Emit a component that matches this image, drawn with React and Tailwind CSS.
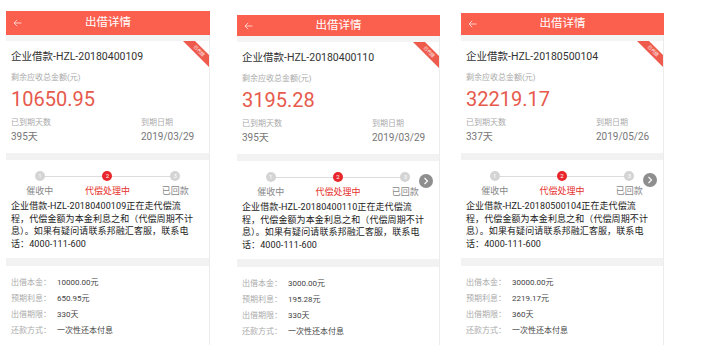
import React from "react";

const FONT = { fontFamily: "Roboto, 'Noto Sans CJK SC', 'Noto Sans', sans-serif" };

const panels = [
  {
    id: "20180400109",
    remain: "10650.95",
    days: "395天",
    date: "2019/03/29",
    principal: "10000.00元",
    interest: "650.95元",
    term: "330天",
    arrow: false,
    wrap: "ml-[6px] w-[204px] pt-[11px]",
    head: "h-[24px]",
  },
  {
    id: "20180400110",
    remain: "3195.28",
    days: "395天",
    date: "2019/03/29",
    principal: "3000.00元",
    interest: "195.28元",
    term: "330天",
    arrow: true,
    wrap: "ml-[27px] w-[203px] pt-[15px]",
    head: "h-[21px]",
  },
  {
    id: "20180500104",
    remain: "32219.17",
    days: "337天",
    date: "2019/05/26",
    principal: "30000.00元",
    interest: "2219.17元",
    term: "360天",
    arrow: true,
    wrap: "ml-[21px] w-[203px] pt-[13px]",
    head: "h-[22px]",
  },
];

function Ribbon() {
  return (
    <svg className="absolute top-0 right-0" width="26" height="26" viewBox="0 0 26 26">
      <polygon points="0,0 12,0 26,14 26,26" fill="#ee5a4c" />
      <text
        x="15"
        y="11"
        fontSize="4.5"
        fill="#ffffff"
        textAnchor="middle"
        transform="rotate(45 15 11)"
        fontFamily="'Noto Sans CJK SC', sans-serif"
      >
        已代偿
      </text>
    </svg>
  );
}

function Step({ n, label, active }) {
  return (
    <div className="flex flex-col items-center">
      <div
        className={
          active
            ? "relative z-10 flex h-[10px] w-[10px] items-center justify-center rounded-full bg-[#e8262b] text-[6px] leading-none text-white"
            : "relative z-10 flex h-[10px] w-[10px] items-center justify-center rounded-full bg-[#d4d4d4] text-[6px] leading-none text-white"
        }
      >
        {n}
      </div>
      <div
        className={
          active
            ? "mt-[4px] text-[9px] leading-[13px] text-[#e6322d]"
            : "mt-[4px] text-[9px] leading-[13px] text-[#888]"
        }
      >
        {label}
      </div>
    </div>
  );
}

function Panel({ p }) {
  return (
    <div className={"flex shrink-0 flex-col " + p.wrap}>
      <div className={"relative flex items-center justify-center bg-[#fb604f] " + p.head}>
        <svg className="absolute left-[7px] top-1/2 -translate-y-1/2" width="9" height="8" viewBox="0 0 9 8">
          <path d="M8.5 4H1M4.2 0.8 1 4l3.2 3.2" stroke="#ffd9d3" strokeWidth="0.9" fill="none" />
        </svg>
        <span className="text-[11.5px] leading-none text-white">出借详情</span>
      </div>
      <div className="flex flex-1 flex-col border-r border-[#ececec]">
        <div className="h-[6px] bg-[#f4f4f4]" />
        <div className="relative px-[5px] pt-[8px] pb-[9px]">
          <Ribbon />
          <div className="text-[10.5px] leading-[16px] text-[#333]">企业借款-HZL-{p.id}</div>
          <div className="mt-[7px] text-[8px] leading-[12px] text-[#aaa]">剩余应收总金额(元)</div>
          <div className="mt-[2px] text-[20px] leading-[26px] text-[#e65a4c]">{p.remain}</div>
          <div className="mt-[5px] flex">
            <div className="w-[130px]">
              <div className="text-[8px] leading-[12px] text-[#aaa]">已到期天数</div>
              <div className="mt-[1px] text-[10px] leading-[14px] text-[#777]">{p.days}</div>
            </div>
            <div>
              <div className="text-[8px] leading-[12px] text-[#aaa]">到期日期</div>
              <div className="mt-[1px] text-[10px] leading-[14px] text-[#777]">{p.date}</div>
            </div>
          </div>
        </div>
        <div className="h-[7px] bg-[#f2f2f2]" />
        <div className="relative pt-[11px] pb-[7px]">
          <div className="relative grid grid-cols-3">
            <div className="absolute left-[34px] right-[34px] top-[5px] h-px bg-[#dcdcdc]" />
            <Step n="1" label="催收中" />
            <Step n="2" label="代偿处理中" active />
            <Step n="3" label="已回款" />
          </div>
          {p.arrow && (
            <div className="absolute left-[182px] top-[13px] flex h-[14px] w-[14px] items-center justify-center rounded-full bg-[#8e8e8e]">
              <svg width="6" height="8" viewBox="0 0 6 8">
                <path d="M1.5 1 4.5 4 1.5 7" stroke="#fff" strokeWidth="1.1" fill="none" />
              </svg>
            </div>
          )}
          <div className="mt-[2px] px-[5px] text-[9px] font-normal leading-[12.7px] tracking-[0.1px] text-[#222] whitespace-nowrap">
            <div>企业借款-HZL-{p.id}正在走代偿流</div>
            <div>程，代偿金额为本金利息之和（代偿周期不计</div>
            <div>息）。如果有疑问请联系邦融汇客服，联系电</div>
            <div>话：4000-111-600</div>
          </div>
        </div>
        <div className="h-[8px] bg-[#f2f2f2]" />
        <div className="px-[5px] pt-[9px] text-[8px] leading-[16px]">
          {[
            ["出借本金：", p.principal],
            ["预期利息：", p.interest],
            ["出借期限：", p.term],
            ["还款方式：", "一次性还本付息"],
          ].map(([k, v]) => (
            <div key={k} className="flex">
              <div className="w-[46px] text-[#aaa]">{k}</div>
              <div className="text-[#444]">{v}</div>
            </div>
          ))}
        </div>
      </div>
    </div>
  );
}

export default function App() {
  return (
    <div className="flex h-[345px] w-[715px] overflow-hidden bg-white" style={FONT}>
      {panels.map((p) => (
        <Panel key={p.id} p={p} />
      ))}
    </div>
  );
}
